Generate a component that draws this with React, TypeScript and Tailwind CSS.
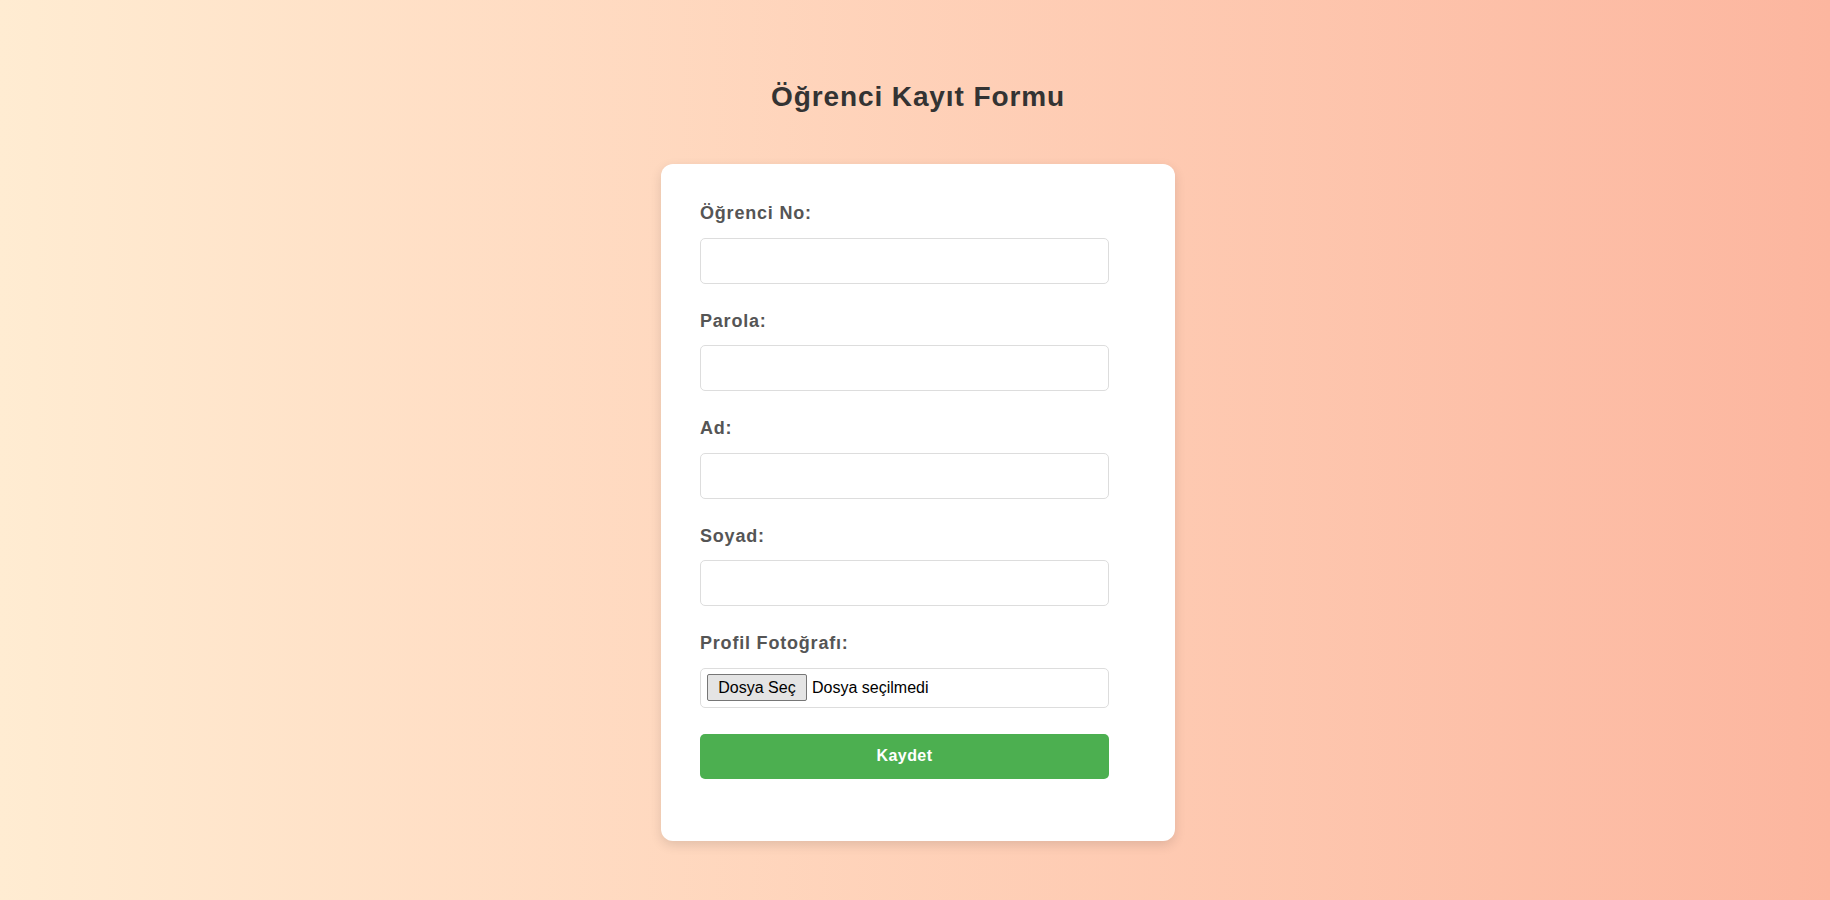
const fields = [
  { id: "ogrenciNo", label: "Öğrenci No:", type: "text" },
  { id: "parola", label: "Parola:", type: "password" },
  { id: "ad", label: "Ad:", type: "text" },
  { id: "soyad", label: "Soyad:", type: "text" },
];

export default function App() {
  return (
    <div
      className="min-h-[900px] w-full bg-gradient-to-r from-[#ffecd2] to-[#fcb69f] pt-[81px] pl-[6px] flex flex-col items-center"
      style={{ fontFamily: '"Liberation Sans", Arial, sans-serif' }}
    >
      <h1 className="text-[28px] leading-[32px] font-bold text-[#333] tracking-[0.9px] mb-[51px]">
        Öğrenci Kayıt Formu
      </h1>

      <form
        className="w-[514px] bg-white rounded-[12px] shadow-[0_4px_12px_rgba(0,0,0,0.12)] pt-[39px] pl-[39px] pb-[62px] flex flex-col"
        onSubmit={(e) => e.preventDefault()}
      >
        {fields.map((f) => (
          <div key={f.id} className="flex flex-col">
            <label
              htmlFor={f.id}
              className="text-[18px] leading-[21px] font-bold text-[#555] tracking-[0.8px] mb-[13.5px]"
            >
              {f.label}
            </label>
            <input
              id={f.id}
              type={f.type}
              className="w-[409px] h-[46px] border border-[#ddd] rounded-[5px] px-[10px] text-[16px] outline-none mb-[27px] bg-white"
            />
          </div>
        ))}

        {/* File picker */}
        <label className="text-[18px] leading-[21px] font-bold text-[#555] tracking-[0.8px] mb-[13.5px]">
          Profil Fotoğrafı:
        </label>
        <div className="w-[409px] h-[40px] border border-[#ddd] rounded-[5px] pl-[6px] flex items-center gap-[5px] mb-[26px]">
          <button
            type="button"
            className="h-[27px] w-[100px] border border-[#767676] rounded-[2px] bg-[#e4e4e4] text-[16px] text-black leading-none"
          >
            Dosya Seç
          </button>
          <span className="text-[16px] text-black">Dosya seçilmedi</span>
        </div>

        <button
          type="submit"
          className="w-[409px] h-[45px] rounded-[5px] bg-[#4caf50] text-white text-[16px] font-bold tracking-[0.4px]"
        >
          Kaydet
        </button>
      </form>
    </div>
  );
}
